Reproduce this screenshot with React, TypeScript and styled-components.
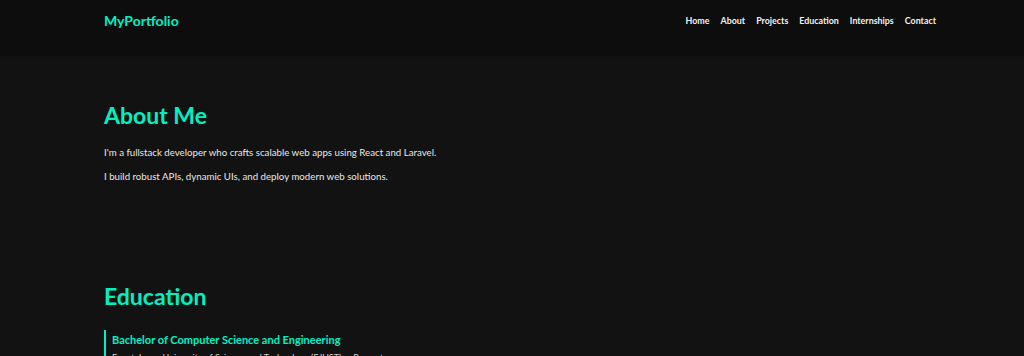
import React from "react"
import styled, { createGlobalStyle } from "styled-components"

const accent = "#00f0c4"

const GlobalStyle = createGlobalStyle`
    html, body {
        margin: 0;
        padding: 0;
        background: #121212;
        font-family: Lato, "Liberation Sans", sans-serif;
        color: #e6e6e6;
    }
    * {
        box-sizing: border-box;
    }
`

const Header = styled.header`
    height: 54px;
    background: #0d0d0d;
    box-shadow: 0 1px 3px rgba(0, 0, 0, 0.5);
    padding: 11px 88px 0 104px;
`

const HeaderInner = styled.div`
    display: flex;
    align-items: center;
    justify-content: space-between;
    height: 18px;
`

const Logo = styled.div`
    color: ${accent};
    font-size: 14px;
    font-weight: 700;
`

const Nav = styled.nav`
    display: flex;
    gap: 11px;
`

const NavLink = styled.a`
    color: #f2f2f2;
    font-size: 8.9px;
    font-weight: 700;
    text-decoration: none;
`

const Main = styled.main`
    padding: 0 88px 0 104px;
`

const Section = styled.section<{ $top: number }>`
    padding-top: ${(p) => p.$top}px;
`

const Title = styled.h2<{ $gap: number }>`
    color: ${accent};
    font-size: 23px;
    font-weight: 700;
    line-height: 28px;
    margin: 0 0 ${(p) => p.$gap}px 0;
`

const Text = styled.p`
    font-size: 9.7px;
    line-height: 16px;
    margin: 0 0 8px 0;
    color: #e8e8e8;
`

const Entry = styled.div`
    border-left: 2px solid ${accent};
    padding: 3px 0 0 6px;
`

const EntryTitle = styled.div`
    color: ${accent};
    font-size: 11px;
    font-weight: 700;
    line-height: 14px;
`

const EntryMeta = styled.div`
    color: #d0d0d0;
    font-size: 9px;
    line-height: 14px;
    margin-top: 4px;
`

const links = ["Home", "About", "Projects", "Education", "Internships", "Contact"]

const App: React.FC = () => {
    return (
        <>
            <GlobalStyle />
            <Header>
                <HeaderInner>
                    <Logo>MyPortfolio</Logo>
                    <Nav>
                        {links.map((l) => (
                            <NavLink key={l} href={`#${l.toLowerCase()}`}>
                                {l}
                            </NavLink>
                        ))}
                    </Nav>
                </HeaderInner>
            </Header>
            <Main>
                <Section $top={47}>
                    <Title $gap={15}>About Me</Title>
                    <Text>I'm a fullstack developer who crafts scalable web apps using React and Laravel.</Text>
                    <Text>I build robust APIs, dynamic UIs, and deploy modern web solutions.</Text>
                </Section>
                <Section $top={90}>
                    <Title $gap={20}>Education</Title>
                    <Entry>
                        <EntryTitle>Bachelor of Computer Science and Engineering</EntryTitle>
                        <EntryMeta>Egypt-Japan University of Science and Technology (EJUST) — Present</EntryMeta>
                    </Entry>
                </Section>
            </Main>
        </>
    )
}

export default App
